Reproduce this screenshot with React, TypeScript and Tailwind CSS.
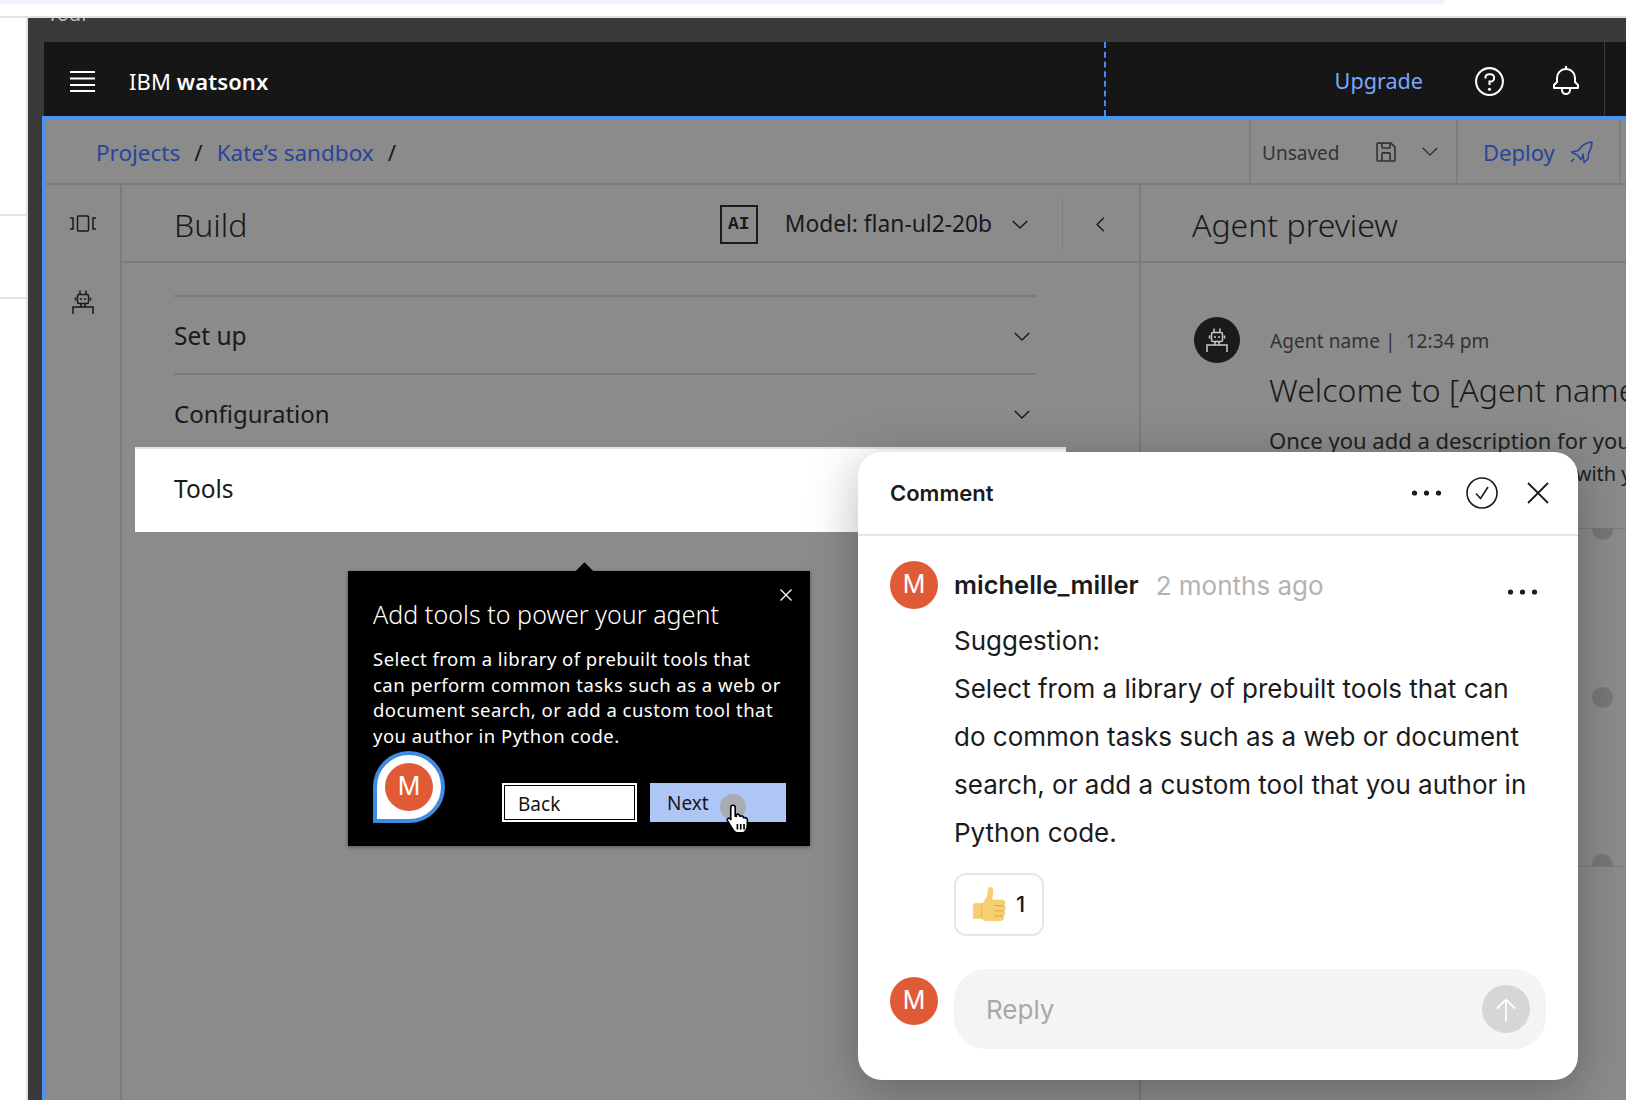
import React from "react";

const plex = "font-['Noto_Sans',sans-serif]";

function Chevron({ className = "" }: { className?: string }) {
  return (
    <svg viewBox="0 0 20 12" className={className} fill="none" stroke="currentColor" strokeWidth="1.6">
      <path d="M2 2l8 8 8-8" />
    </svg>
  );
}

function Bot({ className = "" }: { className?: string }) {
  return (
    <svg viewBox="0 0 22 24" className={className} fill="none" stroke="currentColor" strokeWidth="1.5">
      <path d="M8 0.500v4M14 0.500v4" />
      <rect x="5.500" y="4.500" width="11" height="9" rx="1.500" />
      <path d="M3.500 7.500v3M18.500 7.500v3M9 13.500v3.500M13 13.500v3.500" />
      <path d="M1 24v-7h20v7" />
      <circle cx="9" cy="9" r="1" fill="currentColor" stroke="none" />
      <circle cx="13" cy="9" r="1" fill="currentColor" stroke="none" />
    </svg>
  );
}

function Dots({ className = "" }: { className?: string }) {
  return (
    <svg viewBox="0 0 30 6" className={className} fill="currentColor">
      <circle cx="3" cy="3" r="2.6" />
      <circle cx="15" cy="3" r="2.6" />
      <circle cx="27" cy="3" r="2.6" />
    </svg>
  );
}

function Avatar({ className = "" }: { className?: string }) {
  return (
    <div className={`w-[48px] h-[48px] shrink-0 rounded-full bg-[#e05a36] text-white flex items-center justify-center text-[25px] font-['Inter',sans-serif] ${className}`}>
      M
    </div>
  );
}

function Thumb() {
  return (
    <svg viewBox="0 0 32 34" className="w-[34px] h-[36px] shrink-0">
      <path d="M9 15c3-3 5-7 5-12 0-2 1-3 2.500-3S19 1.500 19 4c0 3-.5 6-1 8h9c2.500 0 3.500 1.500 3.500 3.200 0 1-.4 1.800-1 2.300.9.600 1.300 1.500 1.300 2.500 0 1.100-.5 2-1.300 2.500.6.600.9 1.400.9 2.200 0 1.200-.6 2.100-1.600 2.600.3.500.4 1 .4 1.500 0 2-1.400 3.200-3.400 3.200H13c-3 0-4-1-5-2H1.500C.7 30.500 0 30 0 29V18c0-1.500 1-3 3-3z" fill="#f6cf72" />
      <path d="M20 17.500h9M20 22.500h9M20 27.500h8" stroke="#e3ad48" strokeWidth="1.200" />
      <path d="M8 15v15" stroke="#eebc5a" strokeWidth="1" />
    </svg>
  );
}

export default function App() {
  return (
    <div className={`relative w-[1626px] h-[1100px] overflow-hidden bg-white ${plex}`}>
      {/* browser strip */}
      <div className="h-[18px] border-b-2 border-[#e2e2e2]">
        <div className="w-[1445px] h-[4px] bg-[#edf2fb] rounded-br-[8px]" />
      </div>

      <div className="flex h-[1082px]">
        <div className="w-[28px] shrink-0 border-r-2 border-[#e2e2e2] pt-[196px]">
          <div className="h-[2px] bg-[#e2e2e2]" />
          <div className="h-[2px] bg-[#e2e2e2] mt-[81px]" />
        </div>

        <div className="flex-1 min-w-0 bg-[#3a3a3a] flex flex-col">
          <div className="h-[24px] overflow-hidden pl-[19px] text-[20px] leading-[24px] text-[#bdbdbd]">
            <div className="-mt-[16px]">Tour</div>
          </div>

          <div className="flex-1 min-h-0 pl-[14px] flex flex-col">
            {/* top bar */}
            <div className="ml-[2px] h-[74px] bg-[#161616] flex items-center pt-[4px] text-white relative">
              <svg viewBox="0 0 25 22" className="ml-[26px] w-[25px] h-[22px]" stroke="currentColor" strokeWidth="2">
                <path d="M0 2h25M0 8.500h25M0 15h25M0 21h25" />
              </svg>
              <div className="ml-[34px] pt-[1px] text-[22px] tracking-[0.1px]">
                IBM <span className="font-semibold">watsonx</span>
              </div>
              <div className="ml-auto text-[21.6px] text-[#78a9ff]">Upgrade</div>
              <svg viewBox="0 0 32 32" className="ml-[50px] w-[33px] h-[33px]" fill="currentColor">
                <path d="M16,2A14,14,0,1,0,30,16,14,14,0,0,0,16,2Zm0,26A12,12,0,1,1,28,16,12,12,0,0,1,16,28Z" />
                <circle cx="16" cy="23.500" r="1.500" />
                <path d="M17,8H15.500A4.490,4.490,0,0,0,11,12.500V13h2v-.5A2.500,2.500,0,0,1,15.500,10H17a2.500,2.500,0,0,1,0,5H15v4.500h2V17a4.500,4.500,0,0,0,0-9Z" />
              </svg>
              <svg viewBox="0 0 32 32" className="ml-[44px] w-[32px] h-[32px]" fill="currentColor">
                <path d="M28.7071,19.293,26,16.5859V13a10.0136,10.0136,0,0,0-9-9.9492V1H15V3.0508A10.0136,10.0136,0,0,0,6,13v3.5859L3.2929,19.293A1,1,0,0,0,3,20v3a1,1,0,0,0,1,1h7v.7768a5.152,5.152,0,0,0,4.5,5.1987A5.0057,5.0057,0,0,0,21,25V24h7a1,1,0,0,0,1-1V20A1,1,0,0,0,28.7071,19.293ZM19,25a3,3,0,0,1-6,0V24h6Zm8-3H5V20.4141L7.707,17.707A1,1,0,0,0,8,17V13a8,8,0,0,1,16,0v4a1,1,0,0,0,.293.707L27,20.4141Z" />
              </svg>
              <div className="ml-[22px] mr-[21px] w-px h-[74px] -mt-[4px] bg-[#3d3d3d]" />
              <div className="absolute left-[1060px] top-0 h-full border-l-2 border-dashed border-[#4589ff]" />
            </div>

            {/* workspace */}
            <div className="flex-1 min-h-0 border-t-4 border-l-4 border-[#4a93f5] bg-[#8b8b8b] text-[#191919] flex flex-col">
              <div className="h-[65px] shrink-0 border-b-2 border-[#7b7b7b] flex items-stretch">
                <div className="flex items-center pl-[50px] pt-[3px] text-[22.5px] flex-1">
                  <span className="text-[#27459c]">Projects</span>
                  <span className="ml-[14px]">/</span>
                  <span className="ml-[14px] text-[#27459c]">Kate’s sandbox</span>
                  <span className="ml-[14px]">/</span>
                </div>
                <div className="w-[207px] border-l-2 border-[#7e7e7e] flex items-center pl-[11px] text-[19px] text-[#333333]">
                  <span className="pt-[4px]">Unsaved</span>
                  <svg viewBox="0 0 32 32" className="ml-[34px] w-[26px] h-[26px]" fill="currentColor">
                    <path d="M27.71,9.29l-5-5A1,1,0,0,0,22,4H6A2,2,0,0,0,4,6V26a2,2,0,0,0,2,2H26a2,2,0,0,0,2-2V10A1,1,0,0,0,27.71,9.29ZM12,6h8v4H12Zm8,20H12V18h8Zm2,0V18a2,2,0,0,0-2-2H12a2,2,0,0,0-2,2v8H6V6h4v4a2,2,0,0,0,2,2h8a2,2,0,0,0,2-2V6.410l4,4V26Z" />
                  </svg>
                  <Chevron className="ml-[22px] w-[18px] h-[11px]" />
                </div>
                <div className="w-[165px] border-l-2 border-r-2 border-[#7e7e7e] flex items-center pl-[25px] pt-[1px] text-[22px] text-[#27459c]">
                  <span>Deploy</span>
                  <svg viewBox="0 0 24 24" className="ml-[14px] w-[25px] h-[25px]" fill="none" stroke="currentColor" strokeWidth="1.500" strokeLinejoin="round">
                    <path d="M22 2c-6 .5-10 3.500-13 8l-6.500 1.500 5.500 3 3.500 4.500 2-5.500 1 8 4-3.500c-.5-2 0-4 .5-6C21 9 22 6 22 2z" />
                    <path d="M2 21l3-3" />
                  </svg>
                </div>
                <div className="w-[5px] shrink-0" />
              </div>

              <div className="flex-1 min-h-0 flex">
                <div className="w-[76px] shrink-0 border-r-2 border-[#7b7b7b] flex flex-col items-center">
                  <svg viewBox="0 0 26 17" className="mt-[30px] w-[26px] h-[17px]" fill="none" stroke="currentColor" strokeWidth="1.500">
                    <rect x="7.500" y="1" width="11" height="15" rx="1" />
                    <path d="M0 3h3v11H0M26 3h-3v11h3" />
                  </svg>
                  <Bot className="mt-[58px] w-[22px] h-[24px]" />
                </div>

                <div className="w-[1019px] shrink-0 border-r-2 border-[#7b7b7b]">
                  <div className="h-[78px] border-b-2 border-[#7b7b7b] flex items-center pl-[52px] pr-[33px] pt-[2px]">
                    <div className="text-[32px] font-light pt-[1px]">Build</div>
                    <div className="ml-auto w-[38px] h-[39px] border-2 border-[#1c1c1c] flex items-center justify-center text-[18px] font-bold font-['Liberation_Mono',monospace]">
                      AI
                    </div>
                    <div className="ml-[27px] text-[22.75px] whitespace-nowrap">Model: flan-ul2-20b</div>
                    <Chevron className="ml-[19px] w-[18px] h-[11px]" />
                    <div className="ml-[33px] w-px h-[52px] bg-[#7b7b7b]" />
                    <svg viewBox="0 0 12 20" className="ml-[32px] w-[11px] h-[17px]" fill="none" stroke="currentColor" strokeWidth="1.600">
                      <path d="M10 2L2 10l8 8" />
                    </svg>
                  </div>

                  <div className="pt-[32px] pl-[52px] pr-[103px]">
                    <div className="h-[78px] border-t-2 border-[#7b7b7b] flex items-center justify-between pr-[5px] pt-[2px] text-[24.5px]">
                      <span>Set up</span>
                      <Chevron className="w-[18px] h-[11px]" />
                    </div>
                    <div className="h-[74px] border-t-2 border-[#7b7b7b] flex items-center justify-between pr-[5px] pt-[6px] text-[24px]">
                      <span>Configuration</span>
                      <Chevron className="w-[18px] h-[11px]" />
                    </div>
                    <div className="-ml-[39px] w-[931px] h-[85px] bg-white border-t-2 border-[#e4e4e4] flex items-center pl-[39px] pb-[2px] text-[24.5px]">
                      Tools
                    </div>
                  </div>
                </div>

                <div className="flex-1 min-w-0 relative overflow-hidden">
                  <div className="h-[78px] border-b-2 border-[#7b7b7b] flex items-center pl-[51px] pt-[3px] text-[32px] font-light whitespace-nowrap">
                    Agent preview
                  </div>
                  <div className="pt-[54px] pl-[53px] whitespace-nowrap">
                    <div className="flex items-center">
                      <div className="w-[46px] h-[46px] rounded-full bg-[#1a1a1a] text-[#c9c9c9] flex items-center justify-center">
                        <Bot className="w-[22px] h-[24px]" />
                      </div>
                      <div className="ml-[30px] pt-[2px] text-[19px] tracking-[0.1px] text-[#333333]">Agent name |&nbsp; 12:34 pm</div>
                    </div>
                    <div className="ml-[75px] mt-[5px] text-[32px] leading-[44px] font-light">Welcome to [Agent name]</div>
                    <div className="ml-[75px] mt-[12px] text-[22px] leading-[32px] text-[#1f1f1f]">
                      Once you add a description for your agent
                      <br />
                      <span className="ml-[220px] text-[20px]">and chat with your agent</span>
                    </div>
                  </div>
                  {/* timeline behind the comment */}
                  <div className="absolute left-[1px] right-0 top-[343px] h-px bg-[#7b7b7b]" />
                  <div className="absolute left-[1px] right-0 top-[681px] h-px bg-[#7b7b7b]" />
                  <div className="absolute left-[451px] top-[343px] w-[21px] h-[12px] rounded-b-full bg-[#777777]" />
                  <div className="absolute left-[451px] top-[502px] w-[21px] h-[21px] rounded-full bg-[#777777]" />
                  <div className="absolute left-[451px] top-[669px] w-[21px] h-[12px] rounded-t-full bg-[#777777]" />
                </div>
              </div>
            </div>
          </div>
        </div>
      </div>

      {/* guided-tour popover */}
      <div className="absolute left-[348px] top-[571px] w-[462px] h-[275px] bg-black text-white shadow-[0_1px_4px_rgba(0,0,0,0.4)] pl-[25px] pr-[20px]">
        <div className="absolute left-[230px] -top-[6px] w-[13px] h-[13px] rotate-45 bg-black" />
        <svg viewBox="0 0 12 12" className="absolute left-[432px] top-[18px] w-[12px] h-[12px]" stroke="currentColor" strokeWidth="1.300">
          <path d="M0.500 0.500l11 11M11.500 0.500l-11 11" />
        </svg>
        <div className="relative pt-[25px] text-[25px] leading-[36px] font-light tracking-[0.05px] whitespace-nowrap">Add tools to power your agent</div>
        <div className="mt-[14px] text-[18.5px] leading-[25.7px] tracking-[0.47px] whitespace-nowrap">
          Select from a library of prebuilt tools that
          <br />
          can perform common tasks such as a web or
          <br />
          document search, or add a custom tool that
          <br />
          you author in Python code.
        </div>
        <div className="absolute left-[25px] top-[180px] w-[72px] h-[72px] bg-white border-4 border-[#3f8be0] rounded-t-full rounded-br-full flex items-center justify-center">
          <Avatar />
        </div>
        <div className="absolute left-[154px] top-[212px] flex gap-[13px] text-[19px] leading-[39px]">
          <div className="w-[135px] h-[39px] bg-white border-2 border-white outline-1 -outline-offset-3 outline-black text-[#161616] pl-[14px]">
            <div>Back</div>
          </div>
          <div className="w-[136px] h-[39px] bg-[#aec6f5] text-[#161616] pl-[17px] pt-[1px]">Next</div>
        </div>
        <div className="absolute left-[372px] top-[223px] w-[26px] h-[26px] rounded-full bg-[#a9adb3]" />
        <svg viewBox="0 0 24 28" className="absolute left-[377px] top-[232px] w-[27px] h-[31px]" fill="#ffffff" stroke="#000000" strokeWidth="1.500" strokeLinejoin="round">
          <path d="M7 2c1.200 0 2 .9 2 2v8l1 .1V10.500c1.400-1 3 -.4 3 1.300l.6.200c1.300-.8 2.800-.2 2.900 1.200l.6.2c1.400-.6 2.900.2 2.900 2V20c0 3-2 7-4 7H11c-2 0-3.500-2-5-4.500L2 16c-.8-1.500 1-3 2.400-1.800L5 15V4c0-1.100.8-2 2-2z" />
          <path d="M11 19v5M14 19v5M17 19v5" fill="none" />
        </svg>
      </div>

      {/* comment panel */}
      <div className="absolute left-[858px] top-[452px] w-[720px] h-[628px] bg-white rounded-[24px] shadow-[0_10px_50px_rgba(0,0,0,0.28)] font-['Inter',sans-serif] text-[#1b1b1b] flex flex-col">
        <div className="h-[84px] shrink-0 border-b-2 border-[#e6e6e6] flex items-center pl-[32px]">
          <div className="text-[22px] font-semibold">Comment</div>
          <Dots className="ml-auto w-[31px] h-[6px]" />
          <svg viewBox="0 0 32 32" className="ml-[24px] w-[32px] h-[32px]" fill="none" stroke="#1b1b1b" strokeWidth="1.600">
            <circle cx="16" cy="16" r="15" />
            <path d="M10 16.500l4.500 5L22 10" />
          </svg>
          <svg viewBox="0 0 22 22" className="ml-[29px] mr-[29px] w-[22px] h-[22px]" fill="none" stroke="#1b1b1b" strokeWidth="1.800">
            <path d="M1 1l20 20M21 1L1 21" />
          </svg>
        </div>

        <div className="flex-1 flex flex-col pl-[32px] pr-[32px] pt-[25px]">
          <div className="flex">
            <Avatar />
            <div className="ml-[16px] flex-1 min-w-0">
              <div className="h-[48px] flex items-center relative pt-[1px]">
                <span className="text-[25.5px] font-semibold whitespace-nowrap">michelle_miller</span>
                <span className="ml-[17px] text-[26px] text-[#b3b3b3] whitespace-nowrap">2 months ago</span>
                <Dots className="absolute right-[8px] top-[28px] w-[31px] h-[6px]" />
              </div>
              <div className="mt-[8px] text-[26px] leading-[48px] whitespace-nowrap">
                Suggestion:
                <br />
                Select from a library of prebuilt tools that can
                <br />
                do common tasks such as a web or document
                <br />
                search, or add a custom tool that you author in
                <br />
                Python code.
              </div>
              <div className="mt-[16px] w-[90px] h-[63px] rounded-[12px] border-2 border-[#e6e6e6] flex items-center pl-[17px] gap-[9px]">
                <Thumb />
                <span className="text-[22px] font-medium">1</span>
              </div>
            </div>
          </div>

          <div className="flex mt-[33px]">
            <Avatar className="mt-[8px]" />
            <div className="ml-[16px] flex-1 h-[80px] rounded-[32px] bg-[#f4f4f4] flex items-center pl-[32px] pr-[16px] text-[26px] text-[#a8a8a8]">
              <span>Reply</span>
              <div className="ml-auto w-[48px] h-[48px] rounded-full bg-[#d6d6d6] flex items-center justify-center">
                <svg viewBox="0 0 24 26" className="w-[22px] h-[25px]" fill="none" stroke="#ffffff" strokeWidth="1.800">
                  <path d="M12 26V2M2 12L12 2l10 10" />
                </svg>
              </div>
            </div>
          </div>
        </div>
      </div>
    </div>
  );
}
